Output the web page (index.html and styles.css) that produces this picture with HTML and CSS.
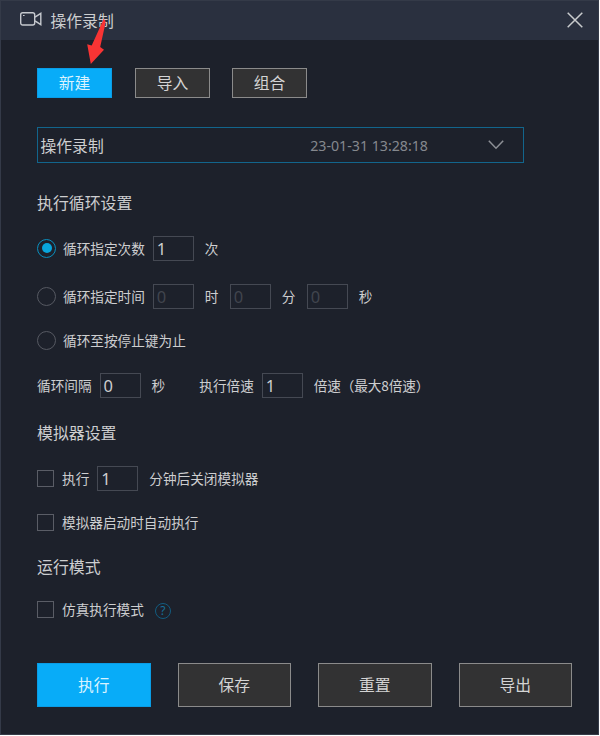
FILE: index.html
```html
<!DOCTYPE html>
<html lang="zh-CN">
<head>
<meta charset="utf-8">
<title>操作录制</title>
<link rel="stylesheet" href="styles.css">
</head>
<body>
<div class="window">
  <header class="titlebar">
    <svg class="camera" width="24" height="16" viewBox="0 0 24 16" fill="none" stroke="#c6c9cf" stroke-width="1.4">
      <rect x="1.7" y="1.8" width="14" height="12.2" rx="2"/>
      <path d="M16 6.2 21.8 2.4V13.6L16 9.8"/>
      <path d="M4 4.5h1.6" stroke-width="1"/>
    </svg>
    <h1 class="title">操作录制</h1>
    <svg class="close" width="16" height="16" viewBox="0 0 16 16" fill="none" stroke="#c9cbcd" stroke-width="1.5"><path d="M.7.7 15.3 15.3M15.3.7.7 15.3"/></svg>
    <svg class="pointer" width="20" height="49" viewBox="0 0 20 49"><path d="M16.5 0Q19 1 18.5 4L13.2 28 17 30.8 3.8 45 .2 25.2 4.7 26.6 14 6Z" fill="#f93434"/></svg>
  </header>
  <main class="content">
    <div class="toolbar">
      <button class="btn primary">新建</button>
      <button class="btn">导入</button>
      <button class="btn">组合</button>
    </div>
    <div class="select">
      <span class="select-name">操作录制</span>
      <span class="select-date">23-01-31 13:28:18</span>
      <svg class="chevron" width="16" height="10" viewBox="0 0 16 10" fill="none" stroke="#8d9096" stroke-width="1.5"><path d="M.8.8 8 8.2 15.2.8"/></svg>
    </div>

    <h2 class="heading loop">执行循环设置</h2>
    <div class="row count">
      <span class="radio checked"></span><span class="label">循环指定次数</span>
      <span class="field">1</span><span class="unit">次</span>
    </div>
    <div class="row time">
      <span class="radio"></span><span class="label">循环指定时间</span>
      <span class="field disabled">0</span><span class="unit">时</span>
      <span class="field disabled next">0</span><span class="unit">分</span>
      <span class="field disabled next">0</span><span class="unit">秒</span>
    </div>
    <div class="row until">
      <span class="radio"></span><span class="label">循环至按停止键为止</span>
    </div>
    <div class="row interval">
      <span>循环间隔</span><span class="field">0</span><span class="unit">秒</span>
      <span class="speed">执行倍速</span><span class="field">1</span><span class="unit rate">倍速（最大8倍速）</span>
    </div>

    <h2 class="heading emulator">模拟器设置</h2>
    <div class="row shutdown">
      <span class="checkbox"></span><span class="label">执行</span>
      <span class="field">1</span><span class="unit">分钟后关闭模拟器</span>
    </div>
    <div class="row autorun">
      <span class="checkbox"></span><span class="label">模拟器启动时自动执行</span>
    </div>

    <h2 class="heading mode">运行模式</h2>
    <div class="row simulate">
      <span class="checkbox"></span><span class="label">仿真执行模式</span>
      <span class="help">?</span>
    </div>

    <footer class="actions">
      <button class="btn primary">执行</button>
      <button class="btn">保存</button>
      <button class="btn">重置</button>
      <button class="btn">导出</button>
    </footer>
  </main>
</div>
</body>
</html>
```
FILE: styles.css
```css
* { box-sizing: border-box; }
body {
  margin: 0;
  background: #fff;
  color: #cdced0;
  font-family: "Noto Sans CJK SC", sans-serif;
  font-weight: 400;
}
.window {
  width: 599px;
  height: 735px;
  background: #1d212b;
  border: 1px solid #343a48;
  border-bottom-color: #353a47;
}
.titlebar {
  position: relative;
  display: flex;
  align-items: center;
  height: 39px;
  padding: 0 15px 0 18px;
  background: #2a303f;
}
.camera { margin-top: -3px; }
.title {
  margin: 1px 0 0 7.5px;
  font-size: 15.8px;
  font-weight: 400;
  line-height: 24px;
}
.close { margin: -2px 0 0 auto; }
.pointer {
  position: absolute;
  left: 86px;
  top: 18px;
  z-index: 1;
}
.content { padding: 28px 26px 0 36px; }
.toolbar { display: flex; gap: 23px; }
.btn {
  width: 75px;
  height: 30px;
  padding: 0;
  border: 1px solid #8b8b8b;
  background: #323233;
  color: #d4d4d4;
  font: 400 15.8px/24px "Noto Sans CJK SC", sans-serif;
}
.btn.primary {
  border-color: #0a9de6;
  background: #08acf8;
  color: #d9f3ff;
}
.toolbar .btn { padding-bottom: 1px; }
.toolbar .btn:last-child { margin-left: -1px; }
.select {
  display: flex;
  align-items: center;
  width: 487px;
  height: 36px;
  margin-top: 29px;
  padding: 0 19px 0 2.5px;
  border: 1px solid #12658c;
  font-size: 15.8px;
}
.select-date {
  margin-left: auto;
  color: #85888e;
  font: 14.2px "Noto Sans", sans-serif;
}
.chevron { margin-left: 60px; }
.heading {
  height: 24px;
  margin: 0;
  font-size: 15.9px;
  font-weight: 400;
  line-height: 24px;
}
.row {
  display: flex;
  align-items: center;
  height: 26px;
  font-size: 13.65px;
  line-height: 20px;
  white-space: nowrap;
}
.loop { margin-top: 28px; }
.count { margin-top: 20px; }
.time { margin-top: 22px; }
.until { margin-top: 18px; }
.interval { margin-top: 19px; }
.emulator { margin-top: 23px; }
.shutdown { margin-top: 20px; }
.autorun { margin-top: 18px; }
.mode { margin-top: 20px; }
.simulate { margin-top: 17px; }
.radio {
  display: grid;
  place-items: center;
  width: 19px;
  height: 19px;
  margin-right: 7px;
  border: 1.5px solid #565962;
  border-radius: 50%;
}
.radio.checked { border: 1.5px solid #0a8fbe; }
.radio.checked::before {
  content: "";
  width: 10px;
  height: 10px;
  border-radius: 50%;
  background: #08a6dc;
}
.checkbox {
  width: 17px;
  height: 17px;
  margin-right: 8px;
  border: 1px solid #5a5d66;
}
.field {
  width: 41px;
  height: 25px;
  margin-left: 8px;
  padding-left: 3px;
  border: 1px solid #454953;
  font: 16.5px/24px "Noto Sans", sans-serif;
}
.field.disabled { color: #41454e; }
.field.next { margin-left: 11.3px; }
.unit { margin-left: 11px; }
.rate { letter-spacing: -.15px; }
.speed { margin-left: 34px; }
.help {
  width: 16px;
  height: 16px;
  margin: 3px 0 0 11px;
  border: 1px solid #125c80;
  border-radius: 50%;
  color: #17709a;
  font: 12px/14px "Noto Sans", sans-serif;
  text-align: center;
}
.actions { display: flex; gap: 27px; margin-top: 41px; }
.actions .btn { width: 113.5px; height: 44px; }
```
